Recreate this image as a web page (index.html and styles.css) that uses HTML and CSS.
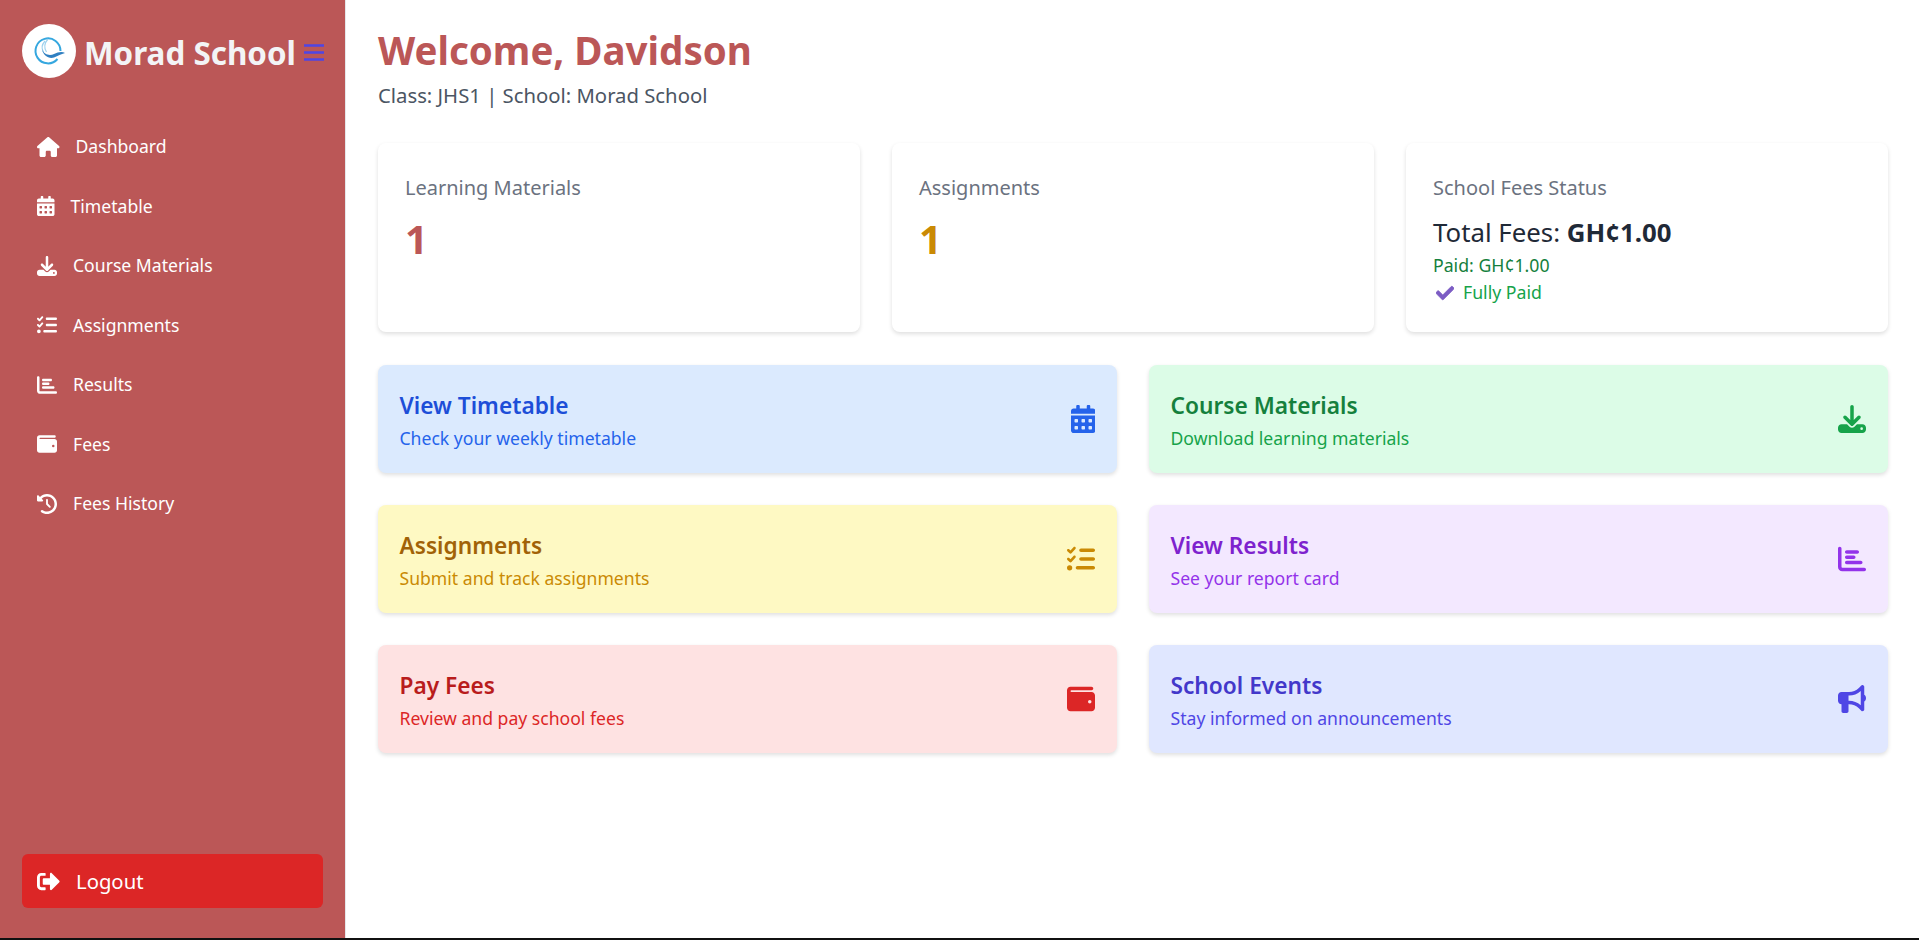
FILE: index.html
```html
<!DOCTYPE html>
<html lang="en">
<head>
    <meta charset="UTF-8">
    <meta name="viewport" content="width=device-width, initial-scale=1.0">
    <title>Morad School - Student Dashboard</title>
    <link rel="stylesheet" href="styles.css">
</head>

<body>
    <div class="layout">
        <!-- Sidebar -->
        <aside class="sidebar">
            <div class="brand">
                <div class="logo">
                    <svg viewBox="0 0 54 54" width="54" height="54">
                        <path d="M38.500 27a12.500 12.500 0 1 0-3 8" fill="none" stroke="#35a7df" stroke-width="2"/>
                        <path d="M23 17c-3.500 4-3.500 8-1.500 11" fill="none" stroke="#9ed2ee" stroke-width="1.200"/>
                        <path d="M26 15c-3.500 4-4 9-1.500 13" fill="none" stroke="#9ed2ee" stroke-width="1.200"/>
                        <path d="M20 25c2 6 8 7 12 5 4-2 8-3 11-1-4 1-7 3-11 4.500-5 1.500-11-1.500-12-8.500z" fill="#2f7fc1"/>
                    </svg>
                </div>
                <span class="brand-name">Morad School</span>
                <svg class="burger" viewBox="0 0 20 17" width="20" height="17">
                    <path d="M0 1.500h20M0 8.500h20M0 15.500h20" stroke="#4f46e5" stroke-width="2.600"/>
                </svg>
            </div>

            <nav class="nav">
                <a class="nav-link" href="#">
                    <svg class="nav-icon" viewBox="0 0 576 512"><path d="M575.800 255.500c0 18-15 32.100-32 32.100h-32l.7 160.200c0 2.700-.2 5.400-.5 8.100V472c0 22.100-17.900 40-40 40H456c-1.100 0-2.200 0-3.300-.1c-1.400 .1-2.800 .1-4.200 .1H416 392c-22.100 0-40-17.900-40-40V448 384c0-17.700-14.300-32-32-32H256c-17.700 0-32 14.300-32 32v64 24c0 22.100-17.900 40-40 40H160 128.100c-1.500 0-3-.1-4.500-.2c-1.200 .1-2.400 .2-3.600 .2H104c-22.100 0-40-17.900-40-40V360c0-.9 0-1.900 .1-2.800V287.600H32c-18 0-32-14-32-32.100c0-9 3-17 10-24L266.400 8c7-7 15-8 22-8s15 2 21 7L564.800 231.500c8 7 12 15 11 24z"/></svg>
                    Dashboard
                </a>
                <a class="nav-link" href="#">
                    <svg class="nav-icon" viewBox="0 0 448 512"><path d="M0 464c0 26.500 21.500 48 48 48h352c26.500 0 48-21.500 48-48V192H0v272zm320-196c0-6.600 5.400-12 12-12h40c6.600 0 12 5.400 12 12v40c0 6.600-5.400 12-12 12h-40c-6.600 0-12-5.400-12-12v-40zm0 128c0-6.600 5.400-12 12-12h40c6.600 0 12 5.400 12 12v40c0 6.600-5.400 12-12 12h-40c-6.600 0-12-5.400-12-12v-40zM192 268c0-6.600 5.400-12 12-12h40c6.600 0 12 5.400 12 12v40c0 6.600-5.400 12-12 12h-40c-6.600 0-12-5.400-12-12v-40zm0 128c0-6.600 5.400-12 12-12h40c6.600 0 12 5.400 12 12v40c0 6.600-5.400 12-12 12h-40c-6.600 0-12-5.400-12-12v-40zM64 268c0-6.600 5.400-12 12-12h40c6.600 0 12 5.400 12 12v40c0 6.600-5.400 12-12 12H76c-6.600 0-12-5.400-12-12v-40zm0 128c0-6.600 5.400-12 12-12h40c6.600 0 12 5.400 12 12v40c0 6.600-5.400 12-12 12H76c-6.600 0-12-5.400-12-12v-40zM400 64h-48V16c0-8.800-7.200-16-16-16h-32c-8.800 0-16 7.200-16 16v48H160V16c0-8.800-7.200-16-16-16h-32c-8.800 0-16 7.200-16 16v48H48C21.500 64 0 85.500 0 112v48h448v-48c0-26.500-21.500-48-48-48z"/></svg>
                    Timetable
                </a>
                <a class="nav-link" href="#">
                    <svg class="nav-icon" viewBox="0 0 512 512"><path d="M288 32c0-17.700-14.300-32-32-32s-32 14.300-32 32V274.700l-73.400-73.400c-12.500-12.500-32.800-12.500-45.300 0s-12.500 32.800 0 45.300l128 128c12.500 12.500 32.800 12.500 45.300 0l128-128c12.500-12.500 12.500-32.800 0-45.300s-32.800-12.500-45.300 0L288 274.700V32zM64 352c-35.300 0-64 28.700-64 64v32c0 35.300 28.700 64 64 64H448c35.300 0 64-28.700 64-64V416c0-35.300-28.700-64-64-64H346.500l-45.300 45.300c-25 25-65.500 25-90.500 0L165.500 352H64zm368 56a24 24 0 1 1 0 48 24 24 0 1 1 0-48z"/></svg>
                    Course Materials
                </a>
                <a class="nav-link" href="#">
                    <svg class="nav-icon" viewBox="0 0 512 512"><path d="M152.100 38.200c9.900 8.900 10.700 24 1.800 33.900l-72 80c-4.400 4.900-10.600 7.800-17.200 7.900s-12.900-2.400-17.600-7L7 113C-2.300 103.600-2.300 88.400 7 79s24.600-9.400 33.900 0l22.100 22.100 55.100-61.200c8.900-9.900 24-10.700 33.900-1.800zm0 160c9.900 8.900 10.700 24 1.800 33.900l-72 80c-4.400 4.900-10.600 7.800-17.200 7.900s-12.900-2.400-17.600-7L7 273c-9.400-9.400-9.400-24.600 0-33.900s24.600-9.400 33.900 0l22.100 22.100 55.100-61.200c8.900-9.900 24-10.700 33.900-1.800zM224 96c0-17.700 14.300-32 32-32H480c17.700 0 32 14.300 32 32s-14.300 32-32 32H256c-17.700 0-32-14.300-32-32zm0 160c0-17.700 14.300-32 32-32H480c17.700 0 32 14.300 32 32s-14.300 32-32 32H256c-17.700 0-32-14.300-32-32zM160 416c0-17.700 14.300-32 32-32H480c17.700 0 32 14.300 32 32s-14.300 32-32 32H192c-17.700 0-32-14.300-32-32zM48 368a48 48 0 1 1 0 96 48 48 0 1 1 0-96z"/></svg>
                    Assignments
                </a>
                <a class="nav-link" href="#">
                    <svg class="nav-icon" viewBox="0 0 512 512"><path d="M32 32c17.700 0 32 14.300 32 32V400c0 8.800 7.200 16 16 16H480c17.700 0 32 14.300 32 32s-14.300 32-32 32H80c-44.200 0-80-35.800-80-80V64C0 46.300 14.300 32 32 32zm96 96c0-17.700 14.300-32 32-32l192 0c17.700 0 32 14.300 32 32s-14.300 32-32 32l-192 0c-17.700 0-32-14.300-32-32zm32 64H288c17.700 0 32 14.300 32 32s-14.300 32-32 32H160c-17.700 0-32-14.300-32-32s14.300-32 32-32zm0 96H416c17.700 0 32 14.300 32 32s-14.300 32-32 32H160c-17.700 0-32-14.300-32-32s14.300-32 32-32z"/></svg>
                    Results
                </a>
                <a class="nav-link" href="#">
                    <svg class="nav-icon" viewBox="0 0 512 512"><path d="M64 32C28.700 32 0 60.700 0 96V416c0 35.300 28.700 64 64 64H448c35.300 0 64-28.700 64-64V192c0-35.300-28.700-64-64-64H80c-8.800 0-16-7.200-16-16s7.200-16 16-16H448c17.700 0 32-14.300 32-32s-14.300-32-32-32H64zM416 272a32 32 0 1 1 0 64 32 32 0 1 1 0-64z"/></svg>
                    Fees
                </a>
                <a class="nav-link" href="#">
                    <svg class="nav-icon" viewBox="0 0 512 512"><path d="M75 75L41 41C25.900 25.900 0 36.600 0 57.900V168c0 13.300 10.700 24 24 24H134.100c21.400 0 32.100-25.900 17-41l-30.800-30.800C155 85.500 203 64 256 64c106 0 192 86 192 192s-86 192-192 192c-40.800 0-78.600-12.700-109.700-34.400c-14.500-10.100-34.400-6.600-44.600 7.900s-6.600 34.400 7.900 44.600C151.200 495 201.700 512 256 512c141.400 0 256-114.600 256-256S397.400 0 256 0C185.300 0 121.300 28.700 75 75zm181 53c-13.300 0-24 10.700-24 24V256c0 6.400 2.500 12.500 7 17l72 72c9.400 9.400 24.600 9.400 33.900 0s9.400-24.600 0-33.900l-65-65V152c0-13.300-10.700-24-24-24z"/></svg>
                    Fees History
                </a>
            </nav>

            <a class="logout" href="#">
                <svg class="logout-icon" viewBox="0 0 512 512"><path d="M497 273L329 441c-15 15-41 4.500-41-17v-96H152c-13.300 0-24-10.700-24-24v-96c0-13.300 10.700-24 24-24h136V88c0-21.400 25.900-32 41-17l168 168c9.300 9.400 9.300 24.600 0 34zM192 436v-40c0-6.600-5.400-12-12-12H96c-17.700 0-32-14.300-32-32V160c0-17.700 14.300-32 32-32h84c6.600 0 12-5.400 12-12V76c0-6.600-5.400-12-12-12H96c-53 0-96 43-96 96v192c0 53 43 96 96 96h84c6.600 0 12-5.400 12-12z"/></svg>
                Logout
            </a>
        </aside>

        <!-- Main content -->
        <main class="main">
            <h1 class="welcome">Welcome, Davidson</h1>
            <p class="class-info">Class: JHS1 | School: Morad School</p>

            <div class="stats">
                <div class="card">
                    <h3 class="card-title">Learning Materials</h3>
                    <p class="card-value value-red">1</p>
                </div>
                <div class="card">
                    <h3 class="card-title">Assignments</h3>
                    <p class="card-value value-yellow">1</p>
                </div>
                <div class="card">
                    <h3 class="card-title">School Fees Status</h3>
                    <p class="fees-total">Total Fees: <strong>GH¢1.00</strong></p>
                    <p class="fees-paid">Paid: GH¢1.00</p>
                    <p class="fees-status">
                        <svg class="check-icon" viewBox="0 0 512 512"><path d="M173.898 439.404l-166.400-166.400c-9.997-9.997-9.997-26.206 0-36.204l36.203-36.204c9.997-9.998 26.207-9.998 36.204 0L192 312.690 432.095 72.596c9.997-9.997 26.207-9.997 36.204 0l36.203 36.204c9.997 9.997 9.997 26.206 0 36.204l-294.400 294.401c-9.998 9.997-26.207 9.997-36.204-.001z"/></svg>
                        Fully Paid
                    </p>
                </div>
            </div>

            <div class="quick-links">
                <a class="quick blue" href="#">
                    <div class="quick-text">
                        <h3 class="quick-title">View Timetable</h3>
                        <p class="quick-desc">Check your weekly timetable</p>
                    </div>
                    <svg class="quick-icon" viewBox="0 0 448 512"><path d="M0 464c0 26.500 21.500 48 48 48h352c26.500 0 48-21.500 48-48V192H0v272zm320-196c0-6.600 5.400-12 12-12h40c6.600 0 12 5.400 12 12v40c0 6.600-5.400 12-12 12h-40c-6.600 0-12-5.400-12-12v-40zm0 128c0-6.600 5.400-12 12-12h40c6.600 0 12 5.400 12 12v40c0 6.600-5.400 12-12 12h-40c-6.600 0-12-5.400-12-12v-40zM192 268c0-6.600 5.400-12 12-12h40c6.600 0 12 5.400 12 12v40c0 6.600-5.400 12-12 12h-40c-6.600 0-12-5.400-12-12v-40zm0 128c0-6.600 5.400-12 12-12h40c6.600 0 12 5.400 12 12v40c0 6.600-5.400 12-12 12h-40c-6.600 0-12-5.400-12-12v-40zM64 268c0-6.600 5.400-12 12-12h40c6.600 0 12 5.400 12 12v40c0 6.600-5.400 12-12 12H76c-6.600 0-12-5.400-12-12v-40zm0 128c0-6.600 5.400-12 12-12h40c6.600 0 12 5.400 12 12v40c0 6.600-5.400 12-12 12H76c-6.600 0-12-5.400-12-12v-40zM400 64h-48V16c0-8.800-7.200-16-16-16h-32c-8.800 0-16 7.200-16 16v48H160V16c0-8.800-7.200-16-16-16h-32c-8.800 0-16 7.200-16 16v48H48C21.500 64 0 85.500 0 112v48h448v-48c0-26.500-21.500-48-48-48z"/></svg>
                </a>
                <a class="quick green" href="#">
                    <div class="quick-text">
                        <h3 class="quick-title">Course Materials</h3>
                        <p class="quick-desc">Download learning materials</p>
                    </div>
                    <svg class="quick-icon" viewBox="0 0 512 512"><path d="M288 32c0-17.700-14.300-32-32-32s-32 14.300-32 32V274.700l-73.400-73.400c-12.500-12.500-32.800-12.500-45.300 0s-12.500 32.800 0 45.300l128 128c12.500 12.500 32.800 12.500 45.300 0l128-128c12.500-12.500 12.500-32.800 0-45.300s-32.800-12.500-45.300 0L288 274.700V32zM64 352c-35.300 0-64 28.700-64 64v32c0 35.300 28.700 64 64 64H448c35.300 0 64-28.700 64-64V416c0-35.300-28.700-64-64-64H346.500l-45.300 45.300c-25 25-65.500 25-90.500 0L165.500 352H64zm368 56a24 24 0 1 1 0 48 24 24 0 1 1 0-48z"/></svg>
                </a>
                <a class="quick yellow" href="#">
                    <div class="quick-text">
                        <h3 class="quick-title">Assignments</h3>
                        <p class="quick-desc">Submit and track assignments</p>
                    </div>
                    <svg class="quick-icon" viewBox="0 0 512 512"><path d="M152.100 38.200c9.900 8.900 10.700 24 1.800 33.900l-72 80c-4.400 4.900-10.600 7.800-17.200 7.900s-12.900-2.400-17.600-7L7 113C-2.300 103.600-2.300 88.400 7 79s24.600-9.400 33.900 0l22.100 22.100 55.100-61.200c8.900-9.900 24-10.700 33.900-1.800zm0 160c9.900 8.900 10.700 24 1.800 33.900l-72 80c-4.400 4.900-10.600 7.800-17.200 7.900s-12.900-2.400-17.600-7L7 273c-9.400-9.400-9.400-24.600 0-33.900s24.600-9.400 33.900 0l22.100 22.100 55.100-61.200c8.900-9.900 24-10.700 33.900-1.800zM224 96c0-17.700 14.300-32 32-32H480c17.700 0 32 14.300 32 32s-14.300 32-32 32H256c-17.700 0-32-14.300-32-32zm0 160c0-17.700 14.300-32 32-32H480c17.700 0 32 14.300 32 32s-14.300 32-32 32H256c-17.700 0-32-14.300-32-32zM160 416c0-17.700 14.300-32 32-32H480c17.700 0 32 14.300 32 32s-14.300 32-32 32H192c-17.700 0-32-14.300-32-32zM48 368a48 48 0 1 1 0 96 48 48 0 1 1 0-96z"/></svg>
                </a>
                <a class="quick purple" href="#">
                    <div class="quick-text">
                        <h3 class="quick-title">View Results</h3>
                        <p class="quick-desc">See your report card</p>
                    </div>
                    <svg class="quick-icon" viewBox="0 0 512 512"><path d="M32 32c17.700 0 32 14.300 32 32V400c0 8.800 7.200 16 16 16H480c17.700 0 32 14.300 32 32s-14.300 32-32 32H80c-44.200 0-80-35.800-80-80V64C0 46.300 14.300 32 32 32zm96 96c0-17.700 14.300-32 32-32l192 0c17.700 0 32 14.300 32 32s-14.300 32-32 32l-192 0c-17.700 0-32-14.300-32-32zm32 64H288c17.700 0 32 14.300 32 32s-14.300 32-32 32H160c-17.700 0-32-14.300-32-32s14.300-32 32-32zm0 96H416c17.700 0 32 14.300 32 32s-14.300 32-32 32H160c-17.700 0-32-14.300-32-32s14.300-32 32-32z"/></svg>
                </a>
                <a class="quick red" href="#">
                    <div class="quick-text">
                        <h3 class="quick-title">Pay Fees</h3>
                        <p class="quick-desc">Review and pay school fees</p>
                    </div>
                    <svg class="quick-icon" viewBox="0 0 512 512"><path d="M64 32C28.700 32 0 60.700 0 96V416c0 35.300 28.700 64 64 64H448c35.300 0 64-28.700 64-64V192c0-35.300-28.700-64-64-64H80c-8.800 0-16-7.200-16-16s7.200-16 16-16H448c17.700 0 32-14.300 32-32s-14.300-32-32-32H64zM416 272a32 32 0 1 1 0 64 32 32 0 1 1 0-64z"/></svg>
                </a>
                <a class="quick indigo" href="#">
                    <div class="quick-text">
                        <h3 class="quick-title">School Events</h3>
                        <p class="quick-desc">Stay informed on announcements</p>
                    </div>
                    <svg class="quick-icon" viewBox="0 0 512 512"><path d="M480 32c0-12.900-7.800-24.600-19.800-29.600s-25.700-2.200-34.900 6.900L381.700 53c-48 48-113.100 75-181 75H192 160 64c-35.300 0-64 28.700-64 64v96c0 35.300 28.700 64 64 64l0 128c0 17.700 14.300 32 32 32h64c17.700 0 32-14.300 32-32V352l8.700 0c67.900 0 133 27 181 75l43.600 43.600c9.200 9.200 22.900 11.900 34.900 6.900s19.800-16.600 19.800-29.600V300.400c18.600-8.800 32-32.500 32-60.400s-13.400-51.600-32-60.400V32zm-64 76.700V240 371.300C357.200 317.800 280.500 288 200.700 288H192V192h8.700c79.800 0 156.500-29.800 215.300-83.300z"/></svg>
                </a>
            </div>
        </main>
    </div>
</body>
</html>
```

FILE: styles.css
```css
* {
    box-sizing: border-box;
}

body {
    margin: 0;
    font-family: "Noto Sans", "Open Sans", sans-serif;
    background-color: #fff;
    color: #1f2937;
}

h1, h3, p {
    margin: 0;
}

a {
    text-decoration: none;
}

.layout {
    display: flex;
    height: 940px;
    border-bottom: 2px solid #111;
}

/* Sidebar */
.sidebar {
    width: 346px;
    flex-shrink: 0;
    display: flex;
    flex-direction: column;
    padding: 24px 22px 30px;
    background-color: #bb5757;
    border-right: 1px solid #e5e7eb;
}

.brand {
    display: flex;
    align-items: center;
}

.logo {
    width: 54px;
    height: 54px;
    border-radius: 50%;
    background-color: #fff;
    flex-shrink: 0;
}

.brand-name {
    margin-left: 8px;
    padding-top: 2px;
    font-size: 31.400px;
    font-weight: 700;
    color: #f3f4f6;
    white-space: nowrap;
}

.burger {
    margin-left: auto;
    margin-right: -1px;
    margin-top: 2px;
    flex-shrink: 0;
}

.nav {
    display: flex;
    flex-direction: column;
    gap: 4.500px;
    margin-top: 41px;
}

.nav-link {
    display: flex;
    align-items: center;
    padding: 14px 15px;
    font-size: 17.600px;
    line-height: 27px;
    color: #fff;
}

.nav-icon {
    height: 20px;
    margin-right: 16px;
    fill: #fff;
    flex-shrink: 0;
}

.logout {
    display: flex;
    align-items: center;
    height: 54px;
    margin-top: auto;
    padding: 0 15px;
    border-radius: 6px;
    background-color: #dc2626;
    font-size: 20.300px;
    color: #fff;
}

.logout-icon {
    height: 23px;
    margin-right: 16px;
    fill: #fff;
}

/* Main */
.main {
    flex: 1;
    padding: 24px 31px 0 32px;
}

.welcome {
    font-size: 38.500px;
    line-height: 52px;
    font-weight: 700;
    color: #bb5757;
}

.class-info {
    margin-top: 4px;
    font-size: 20.300px;
    line-height: 30px;
    color: #4b5563;
}

.stats {
    display: grid;
    grid-template-columns: repeat(3, 1fr);
    gap: 32px;
    margin-top: 33px;
}

.card {
    height: 189px;
    padding: 30px 27px 0;
    border-radius: 8px;
    background-color: #fff;
    box-shadow: 0 2px 4px rgba(0, 0, 0, 0.13);
}

.card-title {
    font-size: 20px;
    line-height: 30px;
    font-weight: 400;
    color: #6b7280;
}

.card-value {
    margin-top: 9px;
    font-size: 40px;
    line-height: 54px;
    font-weight: 700;
}

.value-red {
    color: #bb5757;
}

.value-yellow {
    color: #ca8a04;
}

.fees-total {
    margin-top: 12px;
    font-size: 25.800px;
    line-height: 34px;
    color: #1f2937;
}

.fees-paid {
    margin-top: 2px;
    font-size: 17.700px;
    line-height: 28px;
    color: #15803d;
}

.fees-status {
    display: flex;
    align-items: center;
    margin-top: -1px;
    font-size: 17.700px;
    line-height: 28px;
    color: #16a34a;
}

.check-icon {
    height: 18px;
    margin: 2px 9px 0 3px;
    fill: #7c5cc4;
    stroke: #7c5cc4;
    stroke-width: 24px;
}

.quick-links {
    display: grid;
    grid-template-columns: repeat(2, 1fr);
    gap: 32px;
    margin-top: 33px;
}

.quick {
    display: flex;
    align-items: center;
    justify-content: space-between;
    height: 108px;
    padding: 0 22px 0 21.500px;
    border-radius: 8px;
    box-shadow: 0 2px 4px rgba(0, 0, 0, 0.13);
}

.quick-text {
    padding-top: 3px;
}

.quick-title {
    font-size: 22.700px;
    line-height: 32px;
    font-weight: 600;
}

.quick-desc {
    margin-top: 2px;
    font-size: 17.600px;
    line-height: 28px;
}

.quick-icon {
    height: 28px;
    fill: currentColor;
    flex-shrink: 0;
}

.blue { background-color: #dbeafe; color: #2563eb; }
.blue .quick-title { color: #1d4ed8; }

.green { background-color: #dcfce7; color: #16a34a; }
.green .quick-title { color: #15803d; }

.yellow { background-color: #fef9c3; color: #ca8a04; }
.yellow .quick-title { color: #a16207; }

.purple { background-color: #f3e8ff; color: #9333ea; }
.purple .quick-title { color: #7e22ce; }

.red { background-color: #fee2e2; color: #dc2626; }
.red .quick-title { color: #b91c1c; }

.indigo { background-color: #e0e7ff; color: #4f46e5; }
.indigo .quick-title { color: #4338ca; }
```
